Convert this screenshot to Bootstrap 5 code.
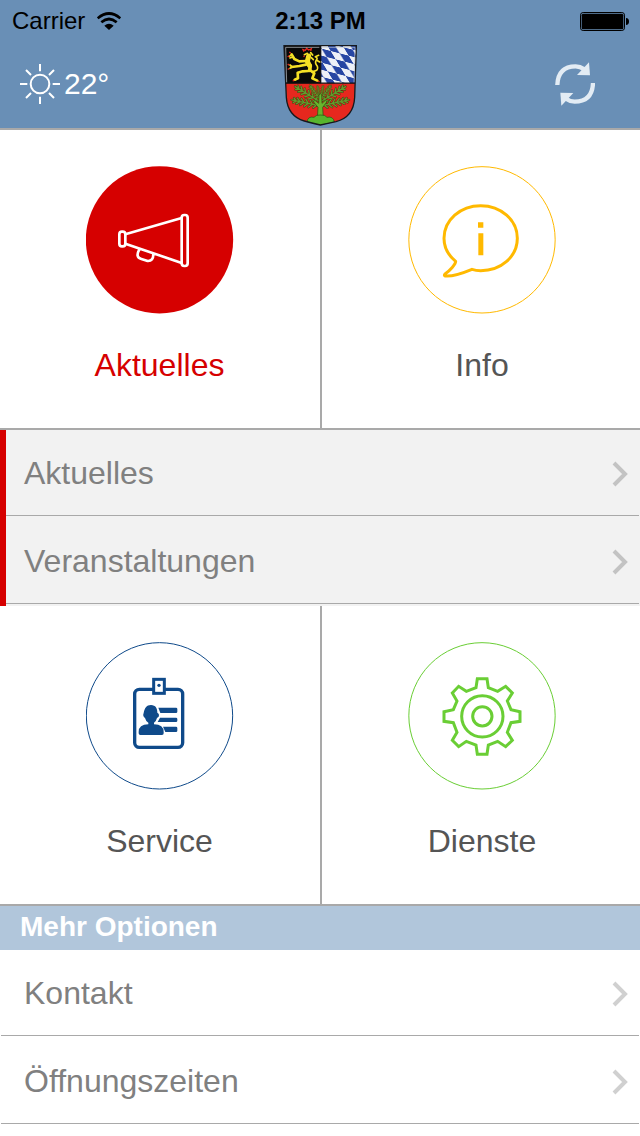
<!DOCTYPE html>
<html lang="de">
<head>
<meta charset="utf-8">
<meta name="viewport" content="width=device-width, initial-scale=1">
<title>Stadt-App</title>
<link href="https://cdn.jsdelivr.net/npm/bootstrap@5.3.0/dist/css/bootstrap.min.css" rel="stylesheet">
<style>
  :root { --line: #a9a9a9; --accent: #d60000; }
  body { font-family: "Liberation Sans", Arial, sans-serif; background: #fff; color: #555; }
  svg { display: block; flex: none; }
  .app-header { background: #698fb6; border-bottom: 2px solid var(--line); }
  .status-bar { height: 40px; padding: 2px 11px 0 12px; font-size: 24px; line-height: 38px; color: #000; }
  .tool-bar { height: 88px; padding: 0 20px; color: #fff; }
  .side { flex: 1 1 0; }
  .refresh { margin-right: 25px; }
  .temperature { font-size: 30px; line-height: 40px; }
  .tiles { border-bottom: 2px solid var(--line); }
  .tile { padding: 36px 1px 43px 0; border: 0; background: #fff; color: #555; font-size: 32px; line-height: 40px; }
  .tile.active { color: var(--accent); }
  .tile + .tile { border-left: 2px solid var(--line); padding-left: 3px; }
  .tile svg { width: 148px; height: 148px; margin: 0 auto 31px; }
  .menu-list a { height: 88px; padding: 0 11px 22px 23px; margin: 0 1px; border-bottom: 1px solid var(--line); color: #808080; font-size: 32px; line-height: 40px; }
  .menu-list a:first-child { height: 86px; }
  .menu-list svg { margin-bottom: 6px; }
  .sub-menu { background: #f2f2f2; border-left: 6px solid var(--accent); padding-bottom: 2px; }
  .sub-menu a { padding-left: 18px; margin-left: 0; }
  .section-title { background: #b1c6db; color: #fff; font-size: 28px; line-height: 40px; padding: 1px 20px 3px; }
</style>
</head>
<body>
<header class="app-header">
  <div class="status-bar d-flex align-items-center">
    <div class="side d-flex align-items-center gap-2">
      <span class="pe-1">Carrier</span>
      <svg width="24" height="18" viewBox="0 0 72 54" fill="none" stroke="#000" stroke-width="8" aria-label="WLAN">
        <path d="M2 19Q36-10 70 19M13 31Q36 11 59 31"/>
        <path d="M22 41Q36 29 50 41L36 54Z" fill="#000" stroke="none"/>
      </svg>
    </div>
    <strong>2:13 PM</strong>
    <div class="side d-flex justify-content-end">
      <svg width="49" height="19" viewBox="0 0 147 57" aria-label="Batterie">
        <rect x="1.5" y="1.5" width="132" height="54" rx="8" fill="none" stroke="#000" stroke-width="3"/>
        <rect x="5" y="5" width="125" height="47" rx="5"/>
        <path d="M138 18Q147 19 147 28.500Q147 38 138 39Z"/>
      </svg>
    </div>
  </div>
  <div class="tool-bar d-flex">
    <div class="side d-flex align-items-center gap-1">
      <svg width="40" height="40" viewBox="0 0 120 120" fill="none" stroke="#fff" stroke-width="6" aria-label="Sonnig">
        <circle cx="60" cy="60" r="28"/>
        <path d="M60 0V22M60 98V120M0 60H22M98 60H120M18 18L33 33M87 87L102 102M18 102L33 87M87 33L102 18"/>
      </svg>
      <span class="temperature">22°</span>
    </div>
    <svg class="mt-1" width="74" height="82" viewBox="54 132 222 246" role="img" aria-label="Stadtwappen">
      <defs>
        <clipPath id="shield"><path d="M57 137H274L269 292Q266 352 213 365Q188 370 166 375Q143 370 118 363Q68 348 64 292Z"/></clipPath>
        <pattern id="lozenges" width="2" height="2" patternUnits="userSpaceOnUse" patternTransform="matrix(27 7 15 25 197 153)">
          <path fill="#eef1f7" d="M0 0H2V2H0Z"/>
          <path fill="#2746a3" d="M1 0H2V1H1ZM0 1H1V2H0Z"/>
        </pattern>
        <path id="sprig-lines" d="M0 0H84M8 0L16-10M8 0L16 10M20 0L30-11M20 0L30 11M33 0L43-11M33 0L43 11M46 0L56-10M46 0L56 10M58 0L68-9M58 0L68 9M70 0L78-7M70 0L78 7"/>
        <g id="sprig" fill="none" stroke-linecap="round">
          <use href="#sprig-lines" stroke="#5a3410" stroke-width="7"/>
          <use href="#sprig-lines" stroke="#5f9c2c" stroke-width="4"/>
        </g>
        <g id="half-crown">
          <use href="#sprig" transform="translate(162 317) rotate(192)"/>
          <use href="#sprig" transform="translate(162 303) rotate(211)"/>
          <use href="#sprig" transform="translate(164 296) rotate(233) scale(.6)"/>
          <use href="#sprig" transform="translate(164 288) rotate(258) scale(.38)"/>
        </g>
        <g id="lion" fill="none" stroke-linecap="round" stroke-linejoin="round">
          <path stroke-width="15" d="M131 168L127 184L133 196"/>
          <path stroke-width="11" d="M136 197L134 211"/>
          <path stroke-width="8" d="M125 183L103 184L88 177L80 163M123 194L103 198L80 201M130 213L113 214L98 218L99 235L89 239M136 211L148 220L142 235L157 242"/>
          <path stroke-width="5" d="M127 160L118 164M137 158L143 165M139 173L145 179M80 164L73 169M84 171L75 174M82 201L75 195M82 201L75 205M145 214Q162 212 157 199Q148 188 154 180Q160 174 151 170L161 166M155 181L164 186"/>
        </g>
      </defs>
      <g clip-path="url(#shield)">
        <path fill="#e6281e" d="M54 132H276V378H54Z"/>
        <path fill="#090909" d="M54 132H167V250H54Z"/>
        <path fill="url(#lozenges)" d="M167 132H276V250H167Z"/>
        <path d="M54 249.500H276M167 132V249" stroke="#111" stroke-width="4"/>
        <use href="#lion" stroke="#f5e025"/>
        <path d="M117 155l-3-6 7 2 4-6 6 5 8-4-2 7M77 160l-4-4M73 167l-5 4M73 196l-5-4M73 206l-5 2M88 241l-5 2M158 244l6 1M119 168l-4 2" fill="none" stroke="#e6281e" stroke-width="4"/>
        <use href="#half-crown"/>
        <use href="#half-crown" transform="translate(332 0) scale(-1 1)"/>
        <path fill="#6ab52d" stroke="#24520f" stroke-width="2" d="M162 285q4-8 8 0l1 25 10-9 5 4-13 17 2 35h-18l2-35-14-17 5-4 11 9z"/>
        <path fill="#58b52d" stroke="#24520f" stroke-width="2" d="M126 366q2-18 21-14 6-8 19-7 15-1 20 7 19-4 22 14l-42 10z"/>
      </g>
      <path fill="none" stroke="#16191d" stroke-width="4" d="M57 137H274L269 292Q266 352 213 365Q188 370 166 375Q143 370 118 363Q68 348 64 292Z"/>
      <path fill="none" stroke="#c5cbd2" stroke-width="2" d="M65 247L62 142H163M170 142H270L267 247"/>
    </svg>
    <div class="side d-flex justify-content-end align-items-center">
      <button class="refresh btn p-0 border-0" type="button" aria-label="Aktualisieren">
        <svg width="40" height="44" viewBox="44 183 120 132">
          <g id="arrow"><path d="M51 252Q53 196 106 196Q119 196 132 205" fill="none" stroke="#e3ecf4" stroke-width="13"/><path d="M146 184L149 223L110 222Z" fill="#e3ecf4"/></g>
          <use href="#arrow" transform="rotate(180 104.500 249)"/>
        </svg>
      </button>
    </div>
  </div>
</header>

<main>
  <div class="tiles row g-0">
    <button type="button" class="tile active col-6">
      <svg viewBox="18 18 444 444" fill="none" stroke="#fff" stroke-width="8" stroke-linejoin="round" aria-hidden="true">
        <circle cx="238.500" cy="239.500" r="221" fill="#d60000" stroke="none"/>
        <rect x="118" y="215" width="18" height="44" rx="8"/>
        <rect x="305" y="165" width="18" height="153" rx="8"/>
        <path d="M136 223L305 174M136 251L305 309M178 268Q165 292 184 297L203 303Q220 304 220 282"/>
      </svg>
      <span class="d-block">Aktuelles</span>
    </button>
    <button type="button" class="tile col-6">
      <svg viewBox="25 18 444 444" fill="none" stroke="#ffb900" stroke-width="9" stroke-linejoin="round" aria-hidden="true">
        <circle cx="247" cy="239.500" r="219.500" stroke-width="3"/>
        <path d="M168 304C147 287 133 263 133 235C133 180 182 137 243 137C304 137 353 180 353 235C353 290 304 332 243 332Q229 332 217 328C188 340 160 350 137 348Q132 346 136 342C151 332 168 313 168 304Z"/>
        <path d="M235 187h16v16h-16zM236 220h15v66h-15z" fill="#ffb900" stroke="none"/>
      </svg>
      <span class="d-block">Info</span>
    </button>
  </div>

  <nav class="menu-list sub-menu" aria-label="Aktuelles">
    <a href="#aktuelles" class="d-flex align-items-end justify-content-between text-decoration-none">Aktuelles
      <svg width="16" height="26" viewBox="0 0 16 26" fill="none" stroke="#c3c3c3" stroke-width="4" aria-hidden="true"><path d="M2 2L13 13L2 24"/></svg></a>
    <a href="#veranstaltungen" class="d-flex align-items-end justify-content-between text-decoration-none">Veranstaltungen
      <svg width="16" height="26" viewBox="0 0 16 26" fill="none" stroke="#c3c3c3" stroke-width="4" aria-hidden="true"><path d="M2 2L13 13L2 24"/></svg></a>
  </nav>

  <div class="tiles row g-0">
    <button type="button" class="tile col-6">
      <svg viewBox="18 18 444 444" fill="none" stroke="#0f4a8a" aria-hidden="true">
        <circle cx="238.500" cy="239.500" r="219.500" stroke-width="3"/>
        <rect x="164" y="160" width="144" height="174" rx="14" stroke-width="10"/>
        <rect x="221" y="130" width="32" height="42" fill="#fff" stroke-width="9"/>
        <circle cx="237" cy="148" r="5" fill="#0f4a8a" stroke="none"/>
        <path fill="#0f4a8a" stroke="none" d="M235 215H288Q292 215 292 219V227Q292 231 288 231H241ZM240 245H288Q292 245 292 249V254Q292 258 288 258H233ZM249 272H288Q292 272 292 276V284Q292 288 288 288H256ZM213 207C227 207 232 218 232 230Q239 233 236 242L231 246Q228 257 222 260V265Q251 265 251 288V292Q251 297 246 297H181Q176 297 176 292V288Q176 265 205 265V260Q197 255 195 246Q187 240 191 231C194 216 199 207 213 207Z"/>
      </svg>
      <span class="d-block">Service</span>
    </button>
    <button type="button" class="tile col-6">
      <svg viewBox="25 18 444 444" fill="none" stroke="#6ace35" stroke-width="9" aria-hidden="true">
        <circle cx="247" cy="239.500" r="219.500" stroke-width="3"/>
        <circle cx="248" cy="241" r="62"/>
        <circle cx="248" cy="241" r="29"/>
        <path d="M233 128H262L266 155L294 166L318 151L338 171L323 195L334 221L361 227V256L334 260L323 289L338 313L318 332L294 316L266 327L262 355H233L229 327L200 316L177 332L158 313L172 289L161 260L133 256V227L161 221L172 195L158 171L177 151L200 166L229 155Z"/>
      </svg>
      <span class="d-block">Dienste</span>
    </button>
  </div>

  <h2 class="section-title fw-bold mb-0">Mehr Optionen</h2>
  <nav class="menu-list" aria-label="Mehr Optionen">
    <a href="#kontakt" class="d-flex align-items-end justify-content-between text-decoration-none">Kontakt
      <svg width="16" height="26" viewBox="0 0 16 26" fill="none" stroke="#d0d0d0" stroke-width="4" aria-hidden="true"><path d="M2 2L13 13L2 24"/></svg></a>
    <a href="#oeffnungszeiten" class="d-flex align-items-end justify-content-between text-decoration-none">Öffnungszeiten
      <svg width="16" height="26" viewBox="0 0 16 26" fill="none" stroke="#d0d0d0" stroke-width="4" aria-hidden="true"><path d="M2 2L13 13L2 24"/></svg></a>
  </nav>
</main>
</body>
</html>
